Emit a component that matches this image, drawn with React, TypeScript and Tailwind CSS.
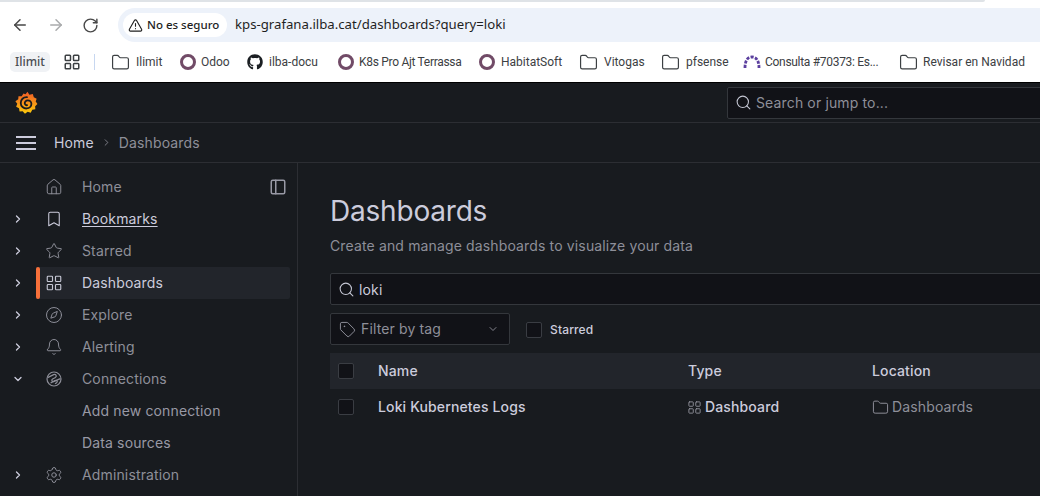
import React from "react";
import { ArrowLeft, ArrowRight, RotateCw, TriangleAlert, LayoutGrid, Folder, Search, House, Bookmark, Star, Compass, Bell, Settings, ChevronRight, ChevronDown, Tag, PanelLeft } from "lucide-react";
import { FaGithub } from "react-icons/fa";

const ui = { fontFamily: '"Noto Sans", "Open Sans", sans-serif' };
const inter = { fontFamily: 'Inter, "Liberation Sans", sans-serif' };
const roboto = { fontFamily: 'Roboto, "Liberation Sans", sans-serif' };

function Ring() {
  return <span className="w-[16px] h-[16px] rounded-full border-[3px] border-[#714b67] shrink-0" />;
}

function BmFolder() {
  return <Folder size={19} strokeWidth={1.5} className="text-[#3c4043] shrink-0" />;
}

function Bm({ icon, label, w, gap, narrow }: { icon: React.ReactNode; label: string; w: string; gap: string; narrow?: boolean }) {
  return (
    <div className={`flex items-center shrink-0 ${gap} ${w}`}>
      {icon}
      <span className={`text-[12px] text-[#3c4043] whitespace-nowrap ${narrow ? "tracking-[-0.3px]" : ""}`} style={roboto}>{label}</span>
    </div>
  );
}

function ArcDots() {
  return (
    <svg width="18" height="14" viewBox="0 0 18 14" className="shrink-0">
      <path d="M2 13 C2 5 5 2 9 2 C13 2 16 5 16 13" fill="none" stroke="#5b3f9e" strokeWidth="2.8" strokeDasharray="3 1.4" />
    </svg>
  );
}

function GrafanaLogo() {
  return (
    <svg width="23" height="24" viewBox="0 0 24 25" className="shrink-0">
      <defs>
        <linearGradient id="gf" x1="0" y1="0" x2="0" y2="1">
          <stop offset="0" stopColor="#f05a28" />
          <stop offset="1" stopColor="#fbca0a" />
        </linearGradient>
      </defs>
      <path
        d="M13 0.8 L15 4 L18.6 3.2 L19.6 6.6 L22.6 8 L21.6 11 L23.4 13.6 L21 15.8 L21.2 19 L18 19.6 L16.4 22.6 L13.2 21.6 L10.4 23.6 L8 21.2 L4.8 21.4 L4.2 18 L1.2 16.4 L2.4 13.2 L0.4 10.6 L3.4 8.6 L3.6 5.4 L7 5.4 L8.8 2.6 L11 3.4 Z"
        fill="url(#gf)"
      />
      <path
        d="M12.5 6.4 C8.6 6.2 6 9 6 12.4 C6 16 9 18.4 12.2 18.2 C15.2 18 17.2 15.8 17.1 13.2 C17 11 15.2 9.6 13.2 9.7 C11.4 9.8 10.1 11.2 10.2 12.8 C10.3 14.2 11.5 15 12.6 14.8"
        fill="none"
        stroke="#181b1f"
        strokeWidth="1.9"
        strokeLinecap="round"
      />
    </svg>
  );
}

function ConnIcon() {
  return (
    <svg width="18" height="18" viewBox="-1 -1 18 18" fill="none" stroke="currentColor" strokeWidth="1.2">
      <circle cx="8" cy="8" r="7" />
      <path d="M1.6 6.6 L7.6 3.6 C10 2.8 11.2 5.2 9.4 6.4 L6.6 8 C5 9 6 11.2 8 10.4 L14.4 7.6" />
      <path d="M4.6 12 L9 9.6 C11 8.8 12 10.4 10.6 11.8 L9 12.8" />
    </svg>
  );
}

function Row({ icon, label, chevron, active, link, child }: { icon?: React.ReactNode; label: string; chevron?: "r" | "d"; active?: boolean; link?: boolean; child?: boolean }) {
  return (
    <div className="h-[32px] flex items-center">
      <div className="w-[36px] pl-[12px] shrink-0 text-[#ccccdc]">
        {chevron === "r" && <ChevronRight size={12} strokeWidth={2.6} />}
        {chevron === "d" && <ChevronDown size={12} strokeWidth={2.6} />}
      </div>
      <div className={`flex items-center h-[32px] w-[254px] rounded-r-[2px] ${active ? "bg-[#22252b]" : ""}`}>
        <div className={`w-[4px] h-[32px] rounded-[2px] shrink-0 ${active ? "bg-[#f7703a]" : ""}`} />
        <div className={`w-[42px] pl-[5px] shrink-0 ${active ? "text-[#c5c7d4]" : "text-[#8e8f99]"}`}>{icon}</div>
        <span className={`text-[14px] pb-[2px] ${active || link ? "text-[#ccccdc]" : child ? "text-[#9899a5]" : "text-[#8e8f99]"} ${link ? "underline underline-offset-[2px]" : ""}`}>{label}</span>
      </div>
    </div>
  );
}

function Check() {
  return <span className="block w-[16px] h-[16px] rounded-[2px] bg-[#111217] border border-[#3a3d43] shrink-0" />;
}

export default function App() {
  return (
    <div className="w-[1040px] h-[496px] overflow-hidden flex flex-col bg-[#181b1f]" style={ui}>
      <div className="h-[2px] bg-white shrink-0">
        <div className="h-[2px] w-[985px] bg-[#dfe3e7] rounded-br-[4px]" />
      </div>
      <div className="h-[40px] bg-white flex items-center shrink-0 pt-[6px]">
        <div className="w-[38px] pl-[11px] shrink-0"><ArrowLeft size={18} strokeWidth={2} className="text-[#474747]" /></div>
        <div className="w-[36px] pl-[9px] shrink-0"><ArrowRight size={18} strokeWidth={2} className="text-[#a9abac]" /></div>
        <div className="w-[44px] pl-[8px] shrink-0"><RotateCw size={17} strokeWidth={2} className="text-[#474747]" /></div>
        <div className="flex-1 h-[34px] bg-[#edf2fa] rounded-l-[17px] flex items-center pl-[5px]">
          <div className="h-[24px] w-[104px] bg-white rounded-[12px] flex items-center pl-[5px] gap-[4px] shrink-0">
            <TriangleAlert size={15} strokeWidth={1.8} className="text-[#1f1f1f] shrink-0" />
            <span className="text-[11.5px] font-medium text-[#1f1f1f] whitespace-nowrap">No es seguro</span>
          </div>
          <span className="ml-[8px] text-[13.2px] text-[#1f1f1f] whitespace-nowrap">kps-grafana.ilba.cat/dashboards?query=loki</span>
        </div>
      </div>
      <div className="h-[40px] bg-white flex items-center shrink-0 pl-[10px]">
        <div className="h-[20px] w-[40px] bg-[#f0f2f5] rounded-[5px] flex items-center justify-center shrink-0">
          <span className="text-[12px] font-medium text-[#4a4d52]">Ilimit</span>
        </div>
        <LayoutGrid size={18} strokeWidth={2} className="text-[#3c4043] ml-[13px] shrink-0" />
        <div className="w-[1px] h-[16px] bg-[#c7d7f0] ml-[13px] mr-[16px] shrink-0" />
        <Bm icon={<BmFolder />} label="Ilimit" w="w-[69px]" gap="gap-[6px]" />
        <Bm icon={<Ring />} label="Odoo" w="w-[67px]" gap="gap-[5px]" />
        <Bm icon={<FaGithub size={16} className="text-[#1b1f23] shrink-0" />} label="ilba-docu" w="w-[91px]" gap="gap-[6px]" />
        <Bm icon={<Ring />} label="K8s Pro Ajt Terrassa" w="w-[141px]" gap="gap-[5px]" narrow />
        <Bm icon={<Ring />} label="HabitatSoft" w="w-[100px]" gap="gap-[6px]" />
        <Bm icon={<BmFolder />} label="Vitogas" w="w-[82px]" gap="gap-[6px]" />
        <Bm icon={<BmFolder />} label="pfsense" w="w-[82px]" gap="gap-[6px]" />
        <Bm icon={<ArcDots />} label="Consulta #70373: Es..." w="w-[156px]" gap="gap-[4px]" narrow />
        <Bm icon={<BmFolder />} label="Revisar en Navidad" w="w-[130px]" gap="gap-[5px]" />
      </div>
      <div className="h-[1px] bg-black shrink-0" />

      <div className="flex-1 flex flex-col min-h-0 tracking-[0.14px]" style={inter}>
        <div className="h-[39px] flex items-center border-b border-[#2c2e33] shrink-0 pl-[15px] box-content">
          <GrafanaLogo />
          <div className="ml-[689px] w-[400px] h-[32px] shrink-0 bg-[#111217] border border-[#34373c] rounded-[2px] flex items-center pl-[7px] gap-[4px]">
            <Search size={17} strokeWidth={1.5} className="text-[#c5c7d4]" />
            <span className="text-[14px] text-[#8e8f99]">Search or jump to...</span>
          </div>
        </div>
        <div className="h-[39px] flex items-center border-b border-[#2c2e33] shrink-0 pl-[16px] box-content">
          <svg width="20" height="14" viewBox="0 0 20 14" className="shrink-0 text-[#ccccdc]" stroke="currentColor" strokeWidth="2">
            <path d="M0 1 H20 M0 7 H20 M0 13 H20" />
          </svg>
          <span className="ml-[18px] text-[14px] text-[#ccccdc]">Home</span>
          <ChevronRight size={11} strokeWidth={1.8} className="mx-[7px] text-[#8e8f99]" />
          <span className="text-[14px] text-[#8e8f99]">Dashboards</span>
        </div>
        <div className="flex-1 flex min-h-0">
          <div className="w-[298px] shrink-0 border-r border-[#2c2e33] pt-[8px]">
            <div className="flex items-center">
              <div className="w-[280px] shrink-0">
                <Row icon={<House size={18} strokeWidth={1.3} />} label="Home" />
              </div>
              <PanelLeft size={18} strokeWidth={2} className="text-[#9899a5] -ml-[11px]" />
            </div>
            <Row chevron="r" icon={<Bookmark size={18} strokeWidth={1.4} className="text-[#ccccdc]" />} label="Bookmarks" link />
            <Row chevron="r" icon={<Star size={18} strokeWidth={1.3} />} label="Starred" />
            <Row chevron="r" icon={<LayoutGrid size={18} strokeWidth={1.5} />} label="Dashboards" active />
            <Row chevron="r" icon={<Compass size={18} strokeWidth={1.3} />} label="Explore" />
            <Row chevron="r" icon={<Bell size={18} strokeWidth={1.3} />} label="Alerting" />
            <Row chevron="d" icon={<ConnIcon />} label="Connections" />
            <Row label="Add new connection" child />
            <Row label="Data sources" child />
            <Row chevron="r" icon={<Settings size={18} strokeWidth={1.3} />} label="Administration" />
          </div>
          <div className="flex-1 min-w-0 pl-[32px] pt-[30px]">
            <div className="text-[28px] leading-[36px] tracking-[-0.2px] text-[#ccccdc]">Dashboards</div>
            <div className="mt-[7px] text-[14px] leading-[20px] text-[#8e8f99]">Create and manage dashboards to visualize your data</div>
            <div className="mt-[17px] w-[800px] h-[32px] bg-[#111217] border border-[#34373c] rounded-[2px] flex items-center pl-[7px] gap-[4px]">
              <Search size={17} strokeWidth={1.5} className="text-[#c5c7d4]" />
              <span className="text-[14px] text-[#ccccdc]">loki</span>
            </div>
            <div className="mt-[8px] h-[32px] flex items-center">
              <div className="w-[180px] h-[32px] bg-[#111217] border border-[#34373c] rounded-[2px] flex items-center pl-[8px] pr-[10px] gap-[5px]">
                <Tag size={17} strokeWidth={1.4} className="text-[#8e8f99] shrink-0" />
                <span className="text-[14px] text-[#8e8f99] flex-1 pb-[1px]">Filter by tag</span>
                <ChevronDown size={12} strokeWidth={1.8} className="text-[#8e8f99]" />
              </div>
              <div className="ml-[16px] pt-[2px]"><Check /></div>
              <span className="ml-[8px] pt-[2px] text-[12px] font-medium text-[#ccccdc]">Starred</span>
            </div>
            <div className="mt-[8px] w-[800px] h-[36px] bg-[#22252b] flex items-center text-[14px] font-[450] text-[#ccccdc]">
              <div className="w-[48px] pl-[8px] shrink-0"><Check /></div>
              <div className="w-[310px] shrink-0 pb-[2px]">Name</div>
              <div className="w-[184px] shrink-0 pb-[2px]">Type</div>
              <div className="pb-[2px]">Location</div>
            </div>
            <div className="w-[800px] h-[36px] flex items-center text-[14px] text-[#ccccdc]">
              <div className="w-[48px] pl-[8px] shrink-0"><Check /></div>
              <div className="w-[310px] shrink-0 font-[450] pb-[1px]">Loki Kubernetes Logs</div>
              <div className="w-[185px] shrink-0 flex items-center gap-[3px] font-[450] -ml-[1px]">
                <LayoutGrid size={15} strokeWidth={1.5} className="text-[#8e8f99] shrink-0" />
                <span className="pb-[1px]">Dashboard</span>
              </div>
              <div className="flex items-center gap-[3px] text-[#8e8f99]">
                <Folder size={17} strokeWidth={1.4} className="shrink-0" />
                <span className="pb-[1px]">Dashboards</span>
              </div>
            </div>
          </div>
        </div>
      </div>
    </div>
  );
}
